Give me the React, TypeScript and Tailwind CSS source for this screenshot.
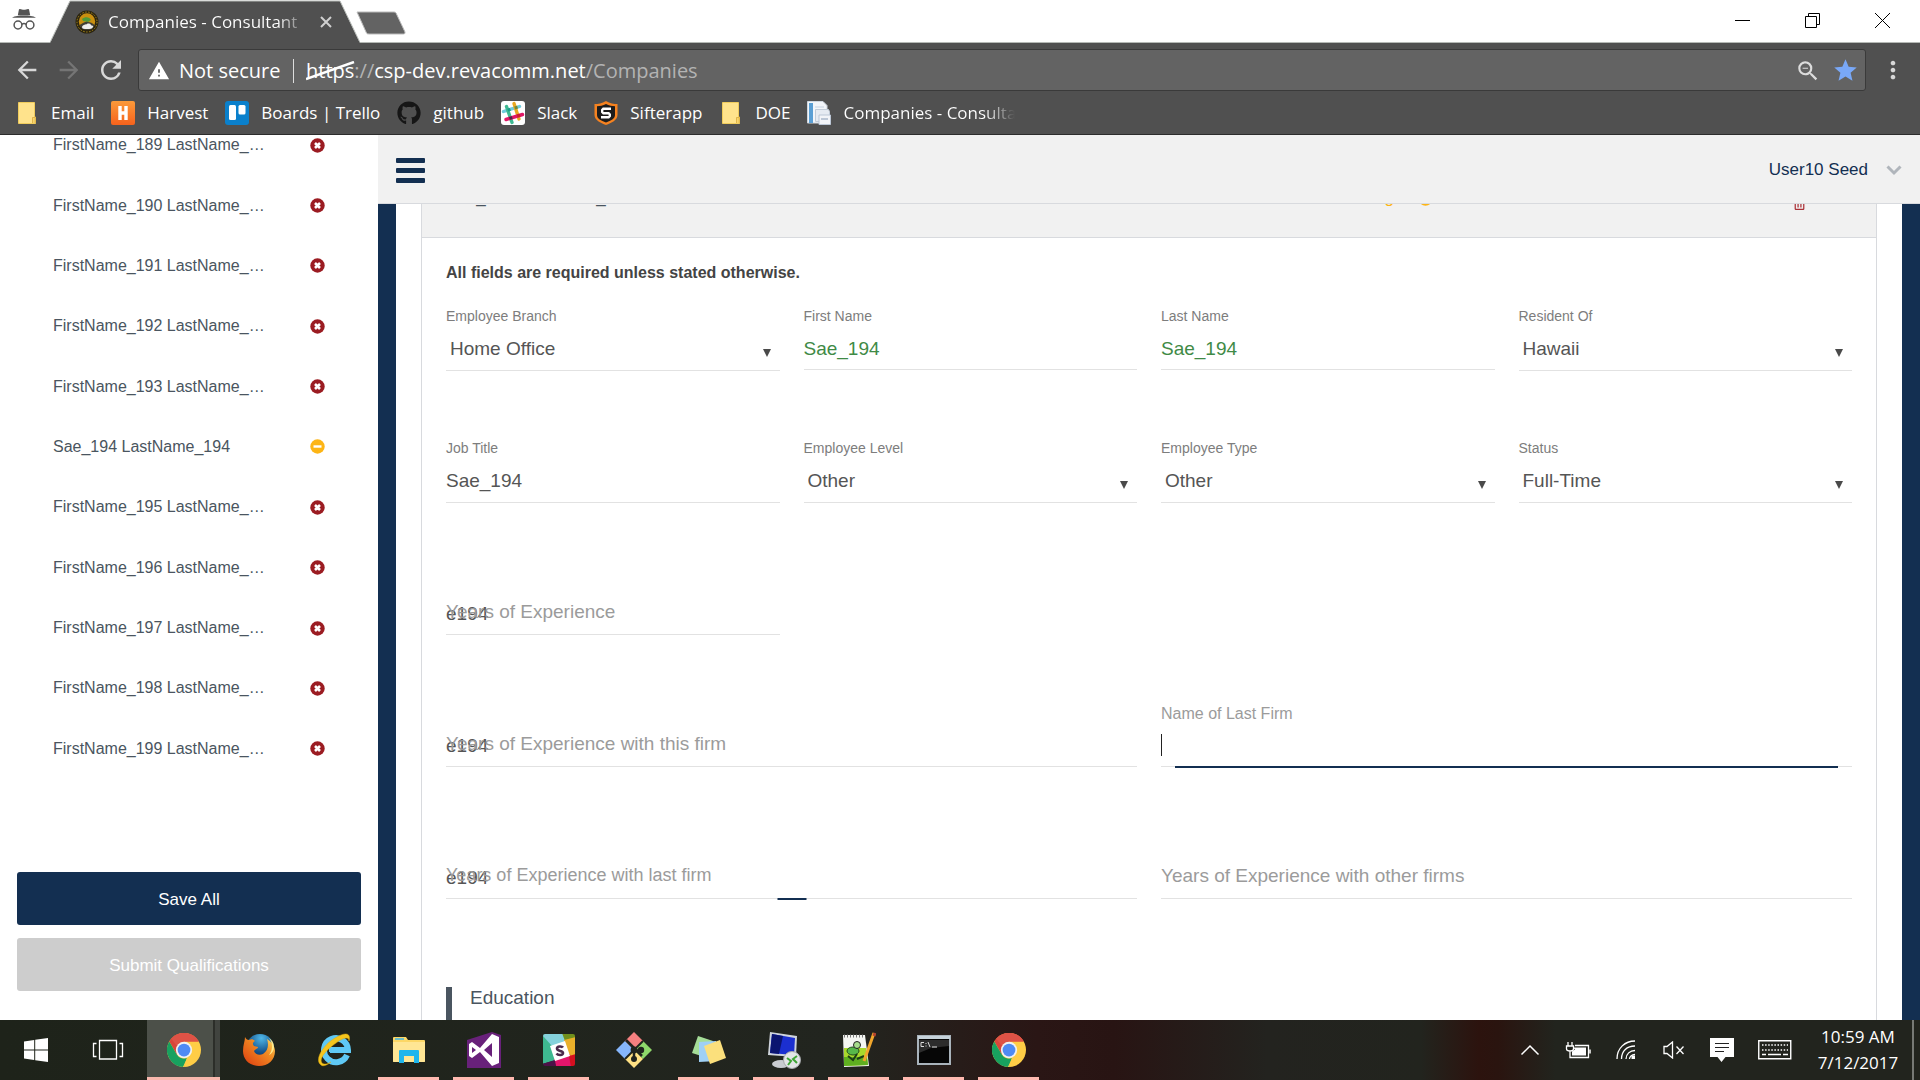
import React from "react";
import { FaGithub, FaRegTrashAlt } from "react-icons/fa";
import { MdZoomOut, MdStar, MdArrowBack, MdArrowForward, MdRefresh, MdMoreVert, MdWarning } from "react-icons/md";

/* ---------- browser chrome icons ---------- */

const Incognito = () => (
  <svg width="24" height="24" viewBox="0 0 24 24" className="shrink-0" aria-hidden="true">
    <path d="M7 2.200 8 2l3 .8h2L16 2l1 .2 1.200 6H5.800z" fill="#555" />
    <path d="M0 10.800C3 9 7 8.600 12 8.600s9 .4 12 2.200z" fill="#555" />
    <g fill="none" stroke="#555" strokeWidth="1.500">
      <circle cx="6" cy="18" r="3.900" />
      <circle cx="18" cy="18" r="3.900" />
      <path d="M9.900 17.300c1.300-1 2.900-1 4.200 0" />
    </g>
  </svg>
);

const SealFavicon = () => (
  <svg width="24" height="24" viewBox="0 0 24 24" className="shrink-0" aria-hidden="true">
    <circle cx="12" cy="12" r="11.500" fill="#2b2410" />
    <circle cx="12" cy="12" r="10" fill="none" stroke="#a88a1a" strokeWidth="1" strokeDasharray="1.500 1.500" />
    <circle cx="12" cy="11.500" r="8.200" fill="#c98f10" />
    <path d="M7 9c3-3 8-2 9 1l-3 2-5-1z" fill="#4e9a3a" />
    <path d="M4.500 15c3-1 5-4 8-3 3 0 5 1 7 3-1 4-4 5-7 5-4 0-7-2-8-5z" fill="#3f3f36" />
    <path d="M7 17c1-3 4-2 5-3s4 0 4 1 3 0 2 2-3 2-6 2-5 0-5-2z" fill="#eee" />
  </svg>
);

const FolderMark = () => (
  <svg width="24" height="24" viewBox="0 0 24 24" className="shrink-0" aria-hidden="true">
    <path d="M3.500 1.500h16V16h1v6.500h-17z" fill="#ffe38c" stroke="#f0cc5c" />
    <path d="M17.500 22v-5.500h2.700V22" fill="#f7d56e" stroke="#d9a93c" strokeWidth=".8" />
  </svg>
);

const HarvestMark = () => (
  <svg width="24" height="24" viewBox="0 0 24 24" className="shrink-0" aria-hidden="true">
    <defs>
      <linearGradient id="harv" x1="0" y1="0" x2="0" y2="1">
        <stop offset="0" stopColor="#fb9a3a" />
        <stop offset="1" stopColor="#f6621c" />
      </linearGradient>
    </defs>
    <rect width="24" height="24" rx="2" fill="url(#harv)" />
    <path d="M9 5v14M15 5v14M9 12h6" stroke="#fff" strokeWidth="3.400" fill="none" />
  </svg>
);

const TrelloMark = () => (
  <svg width="24" height="24" viewBox="0 0 24 24" className="shrink-0" aria-hidden="true">
    <rect width="24" height="24" rx="3" fill="#0a80cc" />
    <rect x="4" y="4" width="7" height="15" rx="1.500" fill="#fff" />
    <rect x="13.500" y="4" width="7" height="9.500" rx="1.500" fill="#fff" />
  </svg>
);

const SlackMark = () => (
  <svg width="24" height="24" viewBox="0 0 24 24" className="shrink-0" aria-hidden="true">
    <rect width="24" height="24" rx="3" fill="#fff" />
    <g strokeWidth="3.400" strokeLinecap="round" fill="none">
      <path d="M2.500 10.500 18.500 5.500" stroke="#6fcbdc" />
      <path d="M5.500 5.500 11 21.500" stroke="#3eb991" />
      <path d="M13 2.500 18 18" stroke="#e9a820" />
      <path d="M5 18.500 21.500 13.500" stroke="#e01765" />
    </g>
    <path d="m6.200 7.800 2.700-.9 1 2.800-2.700.9z" fill="#1a9d88" />
    <path d="m8 16 2.800-.8.9 2.800-2.800.8z" fill="#472a49" />
    <path d="m13.300 5.600 2.800-.9.900 2.800-2.800.9z" fill="#70893a" />
    <path d="m15.800 13.600 2.800-.9.9 2.800-2.800.9z" fill="#cc2027" />
  </svg>
);

const SifterMark = () => (
  <svg width="24" height="24" viewBox="0 0 24 24" className="shrink-0" aria-hidden="true">
    <path d="M12 0c4 2.500 8 3 11.500 3v11c0 5-6 8-11.500 10C6.500 22 .5 19 .5 14V3C4 3 8 2.500 12 0z" fill="#f58220" />
    <path d="M12 3c3 1.500 6 2.200 9 2.300V14c0 3.500-4 5.800-9 7.500-5-1.700-9-4-9-7.500V5.300C6 5.200 9 4.500 12 3z" fill="#1c1c1c" />
    <path d="M15.800 9V7.800H9.300L8.200 9v2l1.200 1.200h5.200l1.200 1.200V15l-1.200 1.300H8.200V15" fill="none" stroke="#fff" strokeWidth="2.400" />
  </svg>
);

const PagesMark = () => (
  <svg width="24" height="24" viewBox="0 0 24 24" className="shrink-0" aria-hidden="true">
    <path d="M.5.500H16l4 4V22H.5z" fill="#f3f6fa" stroke="#cdd5de" />
    <path d="M2 2h4v20H2z" fill="#5b9fd4" />
    <path d="M8 6h9M8 9h9M8 12h9" stroke="#c6d3e2" />
    <path d="M8.500 8.500h13l1 2v10h-14z" fill="#e6ebf2" stroke="#c2ccd8" />
    <path d="M12 14h11.500v9.500H12z" fill="#f2f4f8" stroke="#bcc7d6" />
    <path d="M14 18h7" stroke="#bcc7d6" strokeWidth="2" />
  </svg>
);

/* ---------- taskbar icons ---------- */

const WindowsLogo = () => (
  <svg width="24" height="24" viewBox="0 0 24 24" fill="#fff" aria-hidden="true">
    <path d="M0 3.400 10.200 2v9.400H0zM11.200 1.800 24 0v11.400H11.200zM0 12.500h10.200V22L0 20.600zM11.200 12.500H24V24l-12.800-1.800z" />
  </svg>
);

const TaskView = () => (
  <svg width="32" height="22" viewBox="0 0 32 22" fill="none" stroke="#fff" strokeWidth="1.300" aria-hidden="true">
    <path d="M7.500 1.500h17v18.500h-17zM4.500 4.500H1.500v13h3M27.500 4.500h3v13h-3" />
  </svg>
);

const Chrome = () => (
  <svg width="34" height="34" viewBox="0 0 48 48" aria-hidden="true">
    <circle cx="24" cy="24" r="24" fill="#ffcd46" />
    <path d="M24 24 13.600 30 3.200 12A24 24 0 0 1 44.800 12H24z" fill="#d9453a" />
    <path d="M24 0A24 24 0 0 1 44.800 12H24L13.600 18 6 8.200A24 24 0 0 1 24 0z" fill="#de5246" />
    <path d="M3.200 12 13.600 30a12 12 0 0 0 14.500 5.300L24 48A24 24 0 0 1 3.200 12z" fill="#18a15f" />
    <path d="m34.400 30-10.400 18-1.500-.1 6-12.800z" fill="#ffcd46" />
    <circle cx="24" cy="24" r="11.500" fill="#f1f1f1" />
    <circle cx="24" cy="24" r="9" fill="#4f8af4" />
  </svg>
);

const Firefox = () => (
  <svg width="34" height="34" viewBox="0 0 34 34" aria-hidden="true">
    <defs>
      <radialGradient id="ffg" cx=".55" cy=".15" r=".8">
        <stop offset="0" stopColor="#4fb7e8" />
        <stop offset=".6" stopColor="#17568f" />
        <stop offset="1" stopColor="#0b2450" />
      </radialGradient>
      <linearGradient id="ffo" x1="0" y1="1" x2="1" y2="0">
        <stop offset="0" stopColor="#dd3a10" />
        <stop offset=".6" stopColor="#f08a22" />
        <stop offset="1" stopColor="#ffe36a" />
      </linearGradient>
    </defs>
    <circle cx="18" cy="15" r="14" fill="url(#ffg)" />
    <path d="M3 4c1 2 2 3 4 3 2-1 4-1 6 1-2 1-3 3-1 5l4 1c0 2-3 2-4 4 1 3 5 5 9 3 5-3 6-9 4-15 5 3 8 8 8 12 0 9-7 15-16 15S1 27 1 18C1 12 3 8 3 4z" fill="url(#ffo)" />
    <path d="M27 5c4 5 4 12 0 17 3-1 5-5 5-8 0-4-2-7-5-9z" fill="#ffe98a" />
  </svg>
);

const Explorer = () => (
  <svg width="34" height="34" viewBox="0 0 34 34" aria-hidden="true">
    <path d="M30 22A12 12 0 1 1 31 17H13" fill="none" stroke="#5fc9f5" strokeWidth="6" />
    <path d="M12 17h19" stroke="#5fc9f5" strokeWidth="4" />
    <path d="M3 31C-2 26 6 12 18 5S34 1 32 8c0-5-6-3-13 2S1 25 5 30c2 2 6 1 9-1-5 4-9 5-11 2z" fill="#f5c51d" stroke="#e2ab0c" strokeWidth=".5" />
  </svg>
);

const Files = () => (
  <svg width="34" height="28" viewBox="0 0 34 28" aria-hidden="true">
    <path d="M1 2q0-1 1-1h12l2 3h16q1 0 1 1v20q0 1-1 1H2q-1 0-1-1z" fill="#fcd766" />
    <path d="M1 6h32v19q0 1-1 1H2q-1 0-1-1z" fill="#ffe694" />
    <path d="M3 3h9" stroke="#3cb3e8" strokeWidth="1.500" />
    <path d="M7 27V15q0-1 1-1h18q1 0 1 1v12h-5v-7H12v7z" fill="#1fb6ec" />
  </svg>
);

const VisualStudio = () => (
  <svg width="36" height="36" viewBox="0 0 36 36" aria-hidden="true">
    <path d="M1 8 4 7l22-7 9 3v33H1z" fill="#68217a" />
    <path fillRule="evenodd" d="M3 12l3-2 8 6L26 2l7 3v26l-7 3-12-14-8 6-3-2zm3 3v6l4-3zm12 3 8 7V11z" fill="#fff" />
  </svg>
);

const SlackTile = () => (
  <svg width="34" height="34" viewBox="0 0 34 34" aria-hidden="true">
    <defs>
      <clipPath id="slt"><rect x="1" y="1" width="32" height="32" rx="2" /></clipPath>
    </defs>
    <g clipPath="url(#slt)">
      <path d="M0 0h22l2 9-16 5-8-4z" fill="#85d2dc" />
      <path d="M20 0h14v5l-11 3z" fill="#70901d" />
      <path d="m22 7 12-3v18l-7 3z" fill="#eab02a" />
      <path d="M0 2 10 13l4 14-14 4z" fill="#3eb890" />
      <path d="m12 26 16-5 3 13H14z" fill="#e3156c" />
      <path d="m27 23 7-2v13h-5z" fill="#d4101f" />
      <path d="m0 31 13-4 1 7H0z" fill="#4c1148" />
      <path d="m8 13 15-5 5 15-15 5z" fill="#fff" />
    </g>
    <path d="M21 14.500c-1-1.500-6-1.500-6 1 0 3 6 2 6 4.500s-5 2.500-6.500.5" fill="none" stroke="#4b2a4c" strokeWidth="2.600" />
  </svg>
);

const GitMark = () => (
  <svg width="38" height="38" viewBox="0 0 38 38" aria-hidden="true">
    <path d="m19 1 9 9-5 5-4 4-9-9z" fill="#f58080" />
    <path d="m28 10 9 9-9 9-9-9z" fill="#8fd86a" />
    <path d="m19 19 9 9-9 9-9-9z" fill="#ffe184" />
    <path d="m10 10 9 9-9 9-9-9z" fill="#86b6fb" />
    <path d="M10 28 28 10" stroke="#21241e" strokeWidth="2" />
    <path d="M11 9 27 25M19 17v12M19 20l8-1" stroke="#21241e" strokeWidth="2.500" fill="none" />
    <circle cx="19" cy="19" r="3.400" fill="#21241e" />
    <circle cx="26" cy="19" r="3.200" fill="#21241e" />
    <circle cx="19" cy="28" r="3" fill="#21241e" />
  </svg>
);

const Sticky = () => (
  <svg width="36" height="30" viewBox="0 0 36 30" aria-hidden="true">
    <path d="m7 1 15 5-5 17L1 18z" fill="#a5dd98" />
    <path d="m8 7 17-1 1 20-18 1z" fill="#9fd0f5" />
    <path d="m13 11 16-6 6 18-16 6z" fill="#fbe07c" />
  </svg>
);

const RemoteDesktop = () => (
  <svg width="36" height="38" viewBox="0 0 36 38" aria-hidden="true">
    <ellipse cx="15" cy="33" rx="9" ry="4" fill="#c9ccd0" />
    <path d="m4 1 27 4-1 21-28-2z" fill="#cfd4dc" />
    <path d="m6 3 23 4-1 17-24-2z" fill="#1b2fd0" />
    <path d="m6 3 11 2-4 18-9-1z" fill="#0a1470" />
    <circle cx="26" cy="29" r="8.500" fill="#e3e5e6" stroke="#a5a8aa" />
    <path d="m21 27 4 3-3 4M31 25l-4 3 4 4" fill="none" stroke="#3fa535" strokeWidth="2" />
  </svg>
);

const NotepadPlus = () => (
  <svg width="34" height="36" viewBox="0 0 34 36" aria-hidden="true">
    <path d="M1 3h22l4 31-25 1z" fill="#f4f6f2" />
    <path d="M2 16h22l2 17-24 1z" fill="#a9d92c" />
    <path d="M2 25h23l1 8-24 1z" fill="#5faf20" />
    <path d="M2 4h20" stroke="#777" strokeWidth="3" strokeDasharray="1 2" />
    <ellipse cx="11" cy="19" rx="6" ry="4" fill="#57b84a" stroke="#234d1b" />
    <circle cx="15" cy="13" r="3.500" fill="#a6dd8c" stroke="#222" />
    <path d="m6 24 5 4 4-6M15 27l7-3" stroke="#1d3d16" strokeWidth="2" fill="none" />
    <path d="M32 1 22 29" stroke="#f1a62c" strokeWidth="3" />
    <path d="m33 1-1 3" stroke="#b3432f" strokeWidth="3" />
  </svg>
);

const Cmd = () => (
  <svg width="34" height="30" viewBox="0 0 34 30" aria-hidden="true">
    <path d="M1 1h32v28H1z" fill="#060606" stroke="#a9b3bb" strokeWidth="2" />
    <path d="M1 2.500h32" stroke="#c6d2da" strokeWidth="3" />
    <path d="m2 18 12-5 18-2V5H2z" fill="#2c2c2c" />
    <path d="M7 7.500H4v4h3M9 8v1M9 10.500v1M11 7l2 5M15 12h5" stroke="#ddd" fill="none" />
  </svg>
);

const ChevronUp = () => (
  <svg width="20" height="12" viewBox="0 0 20 12" fill="none" stroke="#fff" strokeWidth="1.500" aria-hidden="true">
    <path d="m1.500 10.500 8.500-8.500 8.500 8.500" />
  </svg>
);
const Battery = () => (
  <svg width="26" height="18" viewBox="0 0 26 18" fill="none" stroke="#fff" aria-hidden="true">
    <path d="M3 1v4M7 1v4M1.500 5h7v3q0 2-3.500 2t-3.500-2zM5 10v6.500h18.500v-12H10" strokeWidth="1.300" />
    <path d="M8 6.500h13v8H7v-4l3-2z" fill="#fff" stroke="none" />
    <path d="M25 8.500v4" strokeWidth="1.500" />
  </svg>
);
const Wifi = () => (
  <svg width="20" height="20" viewBox="0 0 20 20" fill="none" stroke="#fff" strokeWidth="1.300" aria-hidden="true">
    <path d="M1 19C1 8 9 1 19 1M5.500 19C5.500 11 11 6 19 6M10 19c0-5 4-8.500 9-8.500" />
    <path d="M13.500 19c0-2 2-4.500 5.500-4.500" />
    <path d="M15.500 15.500h3.500v3.500h-3.500z" fill="#fff" stroke="none" />
  </svg>
);
const Speaker = () => (
  <svg width="22" height="18" viewBox="0 0 22 18" fill="none" stroke="#fff" strokeWidth="1.300" aria-hidden="true">
    <path d="M1 5.500h3L9.500 1v16L4 12.500H1zM13.500 5.500l7 7.500M20.500 5.500l-7 7.500" />
  </svg>
);
const Message = () => (
  <svg width="24" height="24" viewBox="0 0 24 24" aria-hidden="true">
    <path d="M0 0h24v19H15.500L11.500 24l-4-5H0z" fill="#fff" />
    <path d="M5 5.500h14M5 9.500h14M5 13.500h9" stroke="#222" strokeWidth="1.200" />
  </svg>
);
const Keyboard = () => (
  <svg width="34" height="20" viewBox="0 0 34 20" fill="none" stroke="#fff" aria-hidden="true">
    <path d="M.75.750h32v18h-32z" strokeWidth="1.400" />
    <path d="M4 5h26M4 10h26" strokeWidth="1.400" strokeDasharray="1.500 1.600" />
    <path d="M4 14.500h4M10 14.500h13M25 14.500h5" strokeWidth="1.400" />
  </svg>
);

/* ---------- application icons ---------- */

const ErrorDot = () => (
  <svg width="15" height="15" viewBox="0 0 15 15" role="img" aria-label="Incomplete">
    <circle cx="7.500" cy="7.500" r="7.200" fill="#9b1c22" />
    <path d="m5 5 5 5M10 5l-5 5" stroke="#fff" strokeWidth="2.600" />
  </svg>
);
const PendingDot = () => (
  <svg width="15" height="15" viewBox="0 0 15 15" role="img" aria-label="Pending">
    <circle cx="7.500" cy="7.500" r="7.200" fill="#fdb515" />
    <path d="M3.500 7.500h8" stroke="#fff" strokeWidth="2.400" />
  </svg>
);

/* ---------- browser ---------- */

const bookmarks: { label: string; icon: React.ReactNode }[] = [
  { label: "Email", icon: <FolderMark /> },
  { label: "Harvest", icon: <HarvestMark /> },
  { label: "Boards | Trello", icon: <TrelloMark /> },
  { label: "github", icon: <FaGithub size={24} color="#161616" className="shrink-0" /> },
  { label: "Slack", icon: <SlackMark /> },
  { label: "Sifterapp", icon: <SifterMark /> },
  { label: "DOE", icon: <FolderMark /> },
];

function TitleBar() {
  return (
    <div className="flex h-[43px] shrink-0 border-b border-[#b5b9b5] bg-white">
      <div className="flex w-[50px] items-center justify-center pr-[2px] pb-1">
        <Incognito />
      </div>
      <div className="relative z-10 -mb-px h-[43px] w-[310px]">
        <svg className="absolute inset-0" width="310" height="43" viewBox="0 0 310 43" aria-hidden="true">
          <path d="M0 43 20 1h270l20 42z" fill="#505050" />
          <path d="M0 42.500 20 1h270l20 41.500" fill="none" stroke="#b5b9b5" />
        </svg>
        <div className="relative flex h-full items-center pl-[25px]">
          <SealFavicon />
          <span className="ml-[9px] w-[200px] overflow-hidden bg-linear-to-r from-white from-85% to-transparent bg-clip-text text-[17px] whitespace-nowrap text-transparent">
            Companies - Consultant
          </span>
          <button aria-label="Close tab" className="ml-[12px]">
            <svg width="12" height="12" viewBox="0 0 12 12" stroke="#d0d0d0" strokeWidth="2" aria-hidden="true">
              <path d="m1 1 10 10M11 1 1 11" />
            </svg>
          </button>
        </div>
      </div>
      <button aria-label="New tab" className="-ml-1 self-start pt-[11px]">
        <svg width="50" height="24" viewBox="0 0 50 24" aria-hidden="true">
          <path d="M1 1h37q1.500 0 2 1l9 19q.5 2-1.500 2H13q-2 0-2.500-1z" fill="#636363" stroke="#bbb" />
        </svg>
      </button>
      <div className="mr-[2px] ml-auto flex">
        <button aria-label="Minimize" className="flex w-[70px] items-center justify-center">
          <svg width="16" height="16" stroke="#000" aria-hidden="true"><path d="M0 7.500h15" /></svg>
        </button>
        <button aria-label="Restore" className="flex w-[70px] items-center justify-center">
          <svg width="16" height="16" fill="none" stroke="#000" aria-hidden="true"><path d="M.5 3.500h11v11h-11zM3.500 3.500v-3h11v11h-3" /></svg>
        </button>
        <button aria-label="Close" className="flex w-[70px] items-center justify-center">
          <svg width="16" height="16" stroke="#000" aria-hidden="true"><path d="m0 0 15 15M15 0 0 15" /></svg>
        </button>
      </div>
    </div>
  );
}

function Toolbar() {
  return (
    <div className="flex h-[49px] shrink-0 items-center pt-[5px] pl-[6px]">
      <button aria-label="Back" className="flex w-[42px] justify-center text-[#d8d8d8]"><MdArrowBack size={28} /></button>
      <button aria-label="Forward" className="flex w-[42px] justify-center text-[#757575]"><MdArrowForward size={28} /></button>
      <button aria-label="Reload" className="flex w-[42px] justify-center text-[#d8d8d8]"><MdRefresh size={30} /></button>
      <div className="ml-[6px] flex h-[42px] flex-1 items-center rounded-[3px] border border-[#3a3a3a] bg-[#636363] pt-px pr-[6px] pl-[9px]">
        <MdWarning size={22} color="#fff" />
        <span className="ml-[9px] w-[104px] text-[20px] whitespace-nowrap text-white">Not secure</span>
        <span className="ml-[10px] h-6 w-px bg-[#ddd]" />
        <span className="ml-[12px] text-[20px] whitespace-nowrap text-white">
          <span className="relative">
            https
            <svg className="absolute top-[4px] left-0" width="50" height="20" aria-hidden="true">
              <path d="M0 18 48 1" stroke="#fff" strokeWidth="2.500" />
            </svg>
          </span>
          <span className="text-[#b3b3b3]">://</span>csp-dev.revacomm.net<span className="text-[#b3b3b3]">/Companies</span>
        </span>
        <span className="ml-auto flex items-center gap-[11px]">
          <MdZoomOut size={26} color="#dcdcdc" />
          <MdStar size={27} color="#79a8f7" />
        </span>
      </div>
      <button aria-label="Menu" className="flex w-[54px] justify-center text-[#d8d8d8]"><MdMoreVert size={28} /></button>
    </div>
  );
}

function Bookmarks() {
  return (
    <nav className="flex h-[43px] shrink-0 items-center gap-[17px] border-b border-[#2c2c2c] pb-px pl-[15px] text-[17px] whitespace-nowrap text-white">
      {bookmarks.map((b) => (
        <a key={b.label} href="#" className="flex items-center gap-3">
          {b.icon}
          {b.label}
        </a>
      ))}
      <a href="#" className="flex items-center gap-3">
        <PagesMark />
        <span className="w-[172px] overflow-hidden bg-linear-to-r from-white from-82% to-transparent bg-clip-text text-transparent">
          Companies - Consulta
        </span>
      </a>
    </nav>
  );
}

/* ---------- page ---------- */

const employees = [
  "FirstName_189 LastName_…",
  "FirstName_190 LastName_…",
  "FirstName_191 LastName_…",
  "FirstName_192 LastName_…",
  "FirstName_193 LastName_…",
  "Sae_194 LastName_194",
  "FirstName_195 LastName_…",
  "FirstName_196 LastName_…",
  "FirstName_197 LastName_…",
  "FirstName_198 LastName_…",
  "FirstName_199 LastName_…",
];

function Sidebar() {
  return (
    <aside className="flex w-[378px] shrink-0 flex-col overflow-hidden bg-white">
      <ul className="-mt-[20px] flex flex-1 flex-col">
        {employees.map((name) => (
          <li key={name} className="flex flex-1 items-center px-[53px]">
            <a href="#" className="flex flex-1 items-center justify-between text-[16px] text-[#4a5560]">
              {name}
              {name.startsWith("Sae") ? <PendingDot /> : <ErrorDot />}
            </a>
          </li>
        ))}
      </ul>
      <div className="flex flex-col gap-[13px] px-[17px] pt-[93px] pb-[29px] text-[17px] text-white">
        <button className="h-[53px] rounded-[3px] bg-[#132f51] pt-[2px]">Save All</button>
        <button disabled className="h-[53px] rounded-[3px] bg-[#cdcdcd] pt-[2px]">Submit Qualifications</button>
      </div>
    </aside>
  );
}

function SelectField({ id, label, value }: { id: string; label: string; value: string }) {
  return (
    <div className="h-[132px]">
      <label htmlFor={id} className="block h-5 text-[14px] leading-5 text-[#7d7d7d]">{label}</label>
      <div className="relative">
        <select id={id} defaultValue={value} className="block h-[45px] w-full appearance-none border-b border-[#e2e2e2] bg-transparent pt-[2px] pl-1 text-[19px] text-[#555] outline-none">
          <option>{value}</option>
        </select>
        <svg className="pointer-events-none absolute top-[23px] right-[9px]" width="8" height="8" fill="#4a4a4a" aria-hidden="true">
          <path d="M0 0h8L4 8z" />
        </svg>
      </div>
    </div>
  );
}

function TextField({ id, label, value, valid }: { id: string; label: string; value: string; valid?: boolean }) {
  return (
    <div className="h-[132px]">
      <label htmlFor={id} className="block h-5 text-[14px] leading-5 text-[#7d7d7d]">{label}</label>
      <input
        id={id}
        defaultValue={value}
        className={
          valid
            ? "block h-[44px] w-full border-b border-[#e2e2e2] pt-[2px] text-[19px] text-[#3f8a46] outline-none"
            : "block h-[45px] w-full border-b border-[#e2e2e2] pt-[2px] text-[19px] text-[#555] outline-none"
        }
      />
    </div>
  );
}

function OverlapField({ id, label, value, wide, shrinking }: { id: string; label: string; value: string; wide?: boolean; shrinking?: boolean }) {
  return (
    <div className={wide ? "relative col-span-2 h-[132px] pt-5" : "relative h-[132px] pt-5"}>
      <input id={id} defaultValue={value} className="block h-[45px] w-full border-b border-[#e2e2e2] pt-1 text-[19px] text-[#555] outline-none" />
      <label
        htmlFor={id}
        className={
          shrinking
            ? "pointer-events-none absolute top-5 left-0 text-[18px] leading-[43px] text-[#9b9b9b]"
            : "pointer-events-none absolute top-5 left-0 text-[19px] leading-[43px] text-[#9b9b9b]"
        }
      >
        {label}
      </label>
      {shrinking && <span className="absolute top-16 left-1/2 h-[2px] w-[29px] -translate-x-1/2 bg-[#132f51]" />}
    </div>
  );
}

function Page() {
  return (
    <main className="flex min-w-0 flex-1 flex-col">
      <header className="flex h-[69px] shrink-0 items-center justify-between border-b border-[#d8dade] bg-[#f1f1f1] px-[18px]">
        <button aria-label="Toggle menu" className="mt-[3px] flex flex-col gap-[5px]">
          <span className="h-[5px] w-[29px] rounded-[1px] bg-[#132f51]" />
          <span className="h-[5px] w-[29px] rounded-[1px] bg-[#132f51]" />
          <span className="h-[5px] w-[29px] rounded-[1px] bg-[#132f51]" />
        </button>
        <button className="flex items-center gap-[18px] pt-[2px] text-[17px] text-[#132f51]">
          User10 Seed
          <svg width="16" height="11" viewBox="0 0 16 11" fill="none" stroke="#b0b5bb" strokeWidth="3" aria-hidden="true">
            <path d="m1.500 1.500 6.500 6.500 6.500-6.500" />
          </svg>
        </button>
      </header>
      <div className="flex min-h-0 flex-1 overflow-hidden border-x-[18px] border-[#132f51] bg-white px-[25px]">
        <section className="h-max min-h-full flex-1 border-x border-[#d8dade]">
          <div className="h-[34px] overflow-hidden border-b border-[#d8dade] bg-[#f1f1f1]">
            <div className="-mt-[18px] flex h-6 items-center pr-[70px] pl-6 text-[17px] leading-6 text-[#4a5560]">
              <span>Sae_194 LastName_194</span>
              <span className="ml-auto flex items-center gap-[24px] pr-[360px] text-[#fdb515]">
                Pending
                <PendingDot />
              </span>
              <FaRegTrashAlt size={13} color="#a92f35" className="mt-[10px]" />
            </div>
          </div>
          <form className="px-6">
            <p className="pt-[23px] text-[16px] leading-6 font-bold text-[#444]">All fields are required unless stated otherwise.</p>
            <div className="mt-[21px] grid grid-cols-4 gap-x-6">
              <SelectField id="branch" label="Employee Branch" value="Home Office" />
              <TextField id="first" label="First Name" value="Sae_194" valid />
              <TextField id="last" label="Last Name" value="Sae_194" valid />
              <SelectField id="resident" label="Resident Of" value="Hawaii" />
              <TextField id="job" label="Job Title" value="Sae_194" />
              <SelectField id="level" label="Employee Level" value="Other" />
              <SelectField id="type" label="Employee Type" value="Other" />
              <SelectField id="status" label="Status" value="Full-Time" />
              <OverlapField id="yoe" label="Years of Experience" value="e194" />
              <div className="col-span-3" />
              <OverlapField id="yoe-this" label="Years of Experience with this firm" value="e194" wide />
              <div className="relative col-span-2 h-[132px]">
                <label htmlFor="last-firm" className="block h-5 text-[16px] leading-6 text-[#9b9b9b]">Name of Last Firm</label>
                <input id="last-firm" className="block h-[45px] w-full border-b border-[#e2e2e2] text-[19px] text-[#555] outline-none" />
                <span className="absolute top-8 left-0 h-[22px] w-px bg-[#222]" />
                <span className="absolute inset-x-[14px] top-16 h-[2px] bg-[#132f51]" />
              </div>
              <OverlapField id="yoe-last" label="Years of Experience with last firm" value="e194" wide shrinking />
              <OverlapField id="yoe-other" label="Years of Experience with other firms" value="" wide />
            </div>
            <h2 className="mt-[21px] flex h-[60px] gap-[18px] text-[19px] leading-[22px] text-[#4a5560]">
              <span className="w-[6px] bg-[#4a5560]" />
              Education
            </h2>
          </form>
        </section>
      </div>
    </main>
  );
}

/* ---------- taskbar ---------- */

const apps: { name: string; icon: React.ReactNode; open: boolean }[] = [
  { name: "Firefox", icon: <Firefox />, open: false },
  { name: "Internet Explorer", icon: <Explorer />, open: false },
  { name: "File Explorer", icon: <Files />, open: true },
  { name: "Visual Studio", icon: <VisualStudio />, open: true },
  { name: "Slack", icon: <SlackTile />, open: true },
  { name: "Git", icon: <GitMark />, open: false },
  { name: "Sticky Notes", icon: <Sticky />, open: true },
  { name: "Remote Desktop", icon: <RemoteDesktop />, open: true },
  { name: "Notepad++", icon: <NotepadPlus />, open: true },
  { name: "Command Prompt", icon: <Cmd />, open: true },
  { name: "Chrome window", icon: <Chrome />, open: true },
];

const tray: { name: string; icon: React.ReactNode }[] = [
  { name: "Show hidden icons", icon: <ChevronUp /> },
  { name: "Battery", icon: <Battery /> },
  { name: "Network", icon: <Wifi /> },
  { name: "Volume", icon: <Speaker /> },
  { name: "Action Center", icon: <Message /> },
];

function Taskbar() {
  return (
    <footer className="flex h-[60px] shrink-0 bg-[linear-gradient(90deg,#1e231a_0%,#22251f_44%,#2a1615_54%,#281413_58%,#23231f_66%,#22241e_74%,#2c130e_77%,#2a140f_78%,#22241e_81%,#22241e_100%)]">
      <button aria-label="Start" className="flex w-[72px] items-center justify-center"><WindowsLogo /></button>
      <button aria-label="Task View" className="flex w-[72px] items-center justify-center"><TaskView /></button>
      <div className="ml-[3px] flex gap-[2px]">
        <button aria-label="Chrome" className="relative flex w-[73px] items-center justify-center border-b-[3px] border-[#f9b8ae] bg-[#4c5049] pt-[3px]">
          <Chrome />
          <span className="absolute inset-y-0 right-0 w-[7px] border-l-2 border-[#2c2e29] bg-[#41443f]" />
        </button>
        {apps.map((a) => (
          <button key={a.name} aria-label={a.name} className="flex w-[73px] flex-col items-center">
            <span className="flex w-[61px] flex-1 items-center justify-center pt-[3px]">{a.icon}</span>
            <span className={a.open ? "h-[3px] w-[61px] bg-[#ffb9b0]" : "h-[3px] w-[61px]"} />
          </button>
        ))}
      </div>
      <div className="ml-auto flex">
        {tray.map((t) => (
          <button key={t.name} aria-label={t.name} className="flex w-12 items-center justify-center">{t.icon}</button>
        ))}
        <button aria-label="Touch keyboard" className="flex w-[58px] items-center justify-center"><Keyboard /></button>
        <div className="flex w-[108px] flex-col items-center justify-center text-[17px] leading-[26px] text-white">
          <span>10:59 AM</span>
          <span>7/12/2017</span>
        </div>
        <button aria-label="Show desktop" className="w-2 border-l-2 border-[#777975]" />
      </div>
    </footer>
  );
}

export default function App() {
  return (
    <div className="flex h-screen flex-col overflow-hidden bg-[#505050] font-['Open_Sans',sans-serif]">
      <TitleBar />
      <Toolbar />
      <Bookmarks />
      <div className="flex min-h-0 flex-1 bg-white font-['Liberation_Sans',Arial,sans-serif]">
        <Sidebar />
        <Page />
      </div>
      <Taskbar />
    </div>
  );
}
